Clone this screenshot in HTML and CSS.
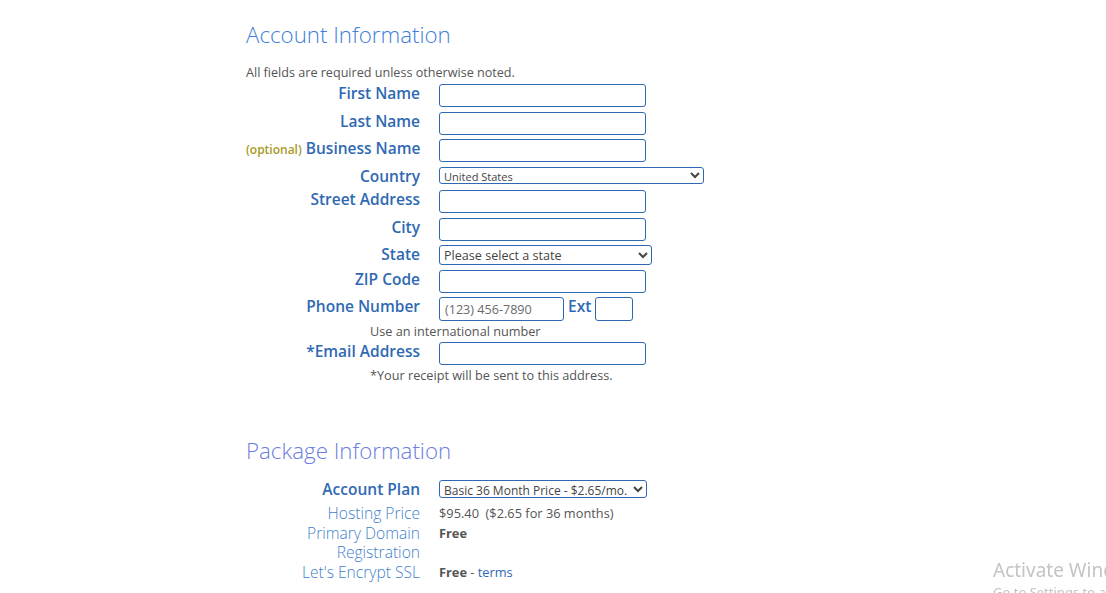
FILE: index.html
```html
<!DOCTYPE html>
<html lang="en">
<head>
<meta charset="utf-8">
<title>Account Information</title>
<link rel="stylesheet" href="styles.css">
</head>
<body>
<main class="page">
  <section class="section">
    <h2 class="heading heading-account">Account Information</h2>
    <p class="note">All fields are required unless otherwise noted.</p>
    <div class="rows">
      <div class="row"><label class="label">First Name</label><input class="input" type="text"></div>
      <div class="row"><label class="label">Last Name</label><input class="input" type="text"></div>
      <div class="row"><label class="label"><span class="optional">(optional)</span> Business Name</label><input class="input" type="text"></div>
      <div class="row row-country"><label class="label">Country</label><select class="select select-country"><option>United States</option></select></div>
      <div class="row"><label class="label">Street Address</label><input class="input" type="text"></div>
      <div class="row"><label class="label">City</label><input class="input" type="text"></div>
      <div class="row"><label class="label">State</label><select class="select select-state"><option>Please select a state</option></select></div>
      <div class="row"><label class="label">ZIP Code</label><input class="input" type="text"></div>
      <div class="row">
        <label class="label">Phone Number</label>
        <div class="phone">
          <input class="input input-phone" type="text" placeholder="(123) 456-7890">
          <span class="ext-label">Ext</span>
          <input class="input input-ext" type="text">
        </div>
      </div>
      <p class="hint">Use an international number</p>
      <div class="row"><label class="label">*Email Address</label><input class="input" type="text"></div>
      <p class="hint hint-receipt">*Your receipt will be sent to this address.</p>
    </div>
  </section>

  <section class="section section-package">
    <h2 class="heading heading-package">Package Information</h2>
    <div class="rows">
      <div class="row row-plan"><label class="label">Account Plan</label><select class="select select-plan"><option>Basic 36 Month Price - $2.65/mo.</option></select></div>
      <div class="info">
        <div class="info-row"><span class="info-label">Hosting Price</span><span class="info-value">$95.40&nbsp; ($2.65 for 36 months)</span></div>
        <div class="info-row"><span class="info-label">Primary Domain Registration</span><span class="info-value"><b>Free</b></span></div>
        <div class="info-row"><span class="info-label">Let's Encrypt SSL</span><span class="info-value"><b>Free</b> - <a class="link" href="#">terms</a></span></div>
      </div>
    </div>
  </section>
</main>
<div class="watermark">
  <div class="wm-title">Activate Windows</div>
  <div class="wm-sub">Go to Settings to activate Windows.</div>
</div>
</body>
</html>
```

FILE: styles.css
```css
html, body {
  margin: 0;
  padding: 0;
  background: #ffffff;
}

body {
  font-family: "Open Sans", "Liberation Sans", sans-serif;
  color: #555555;
  overflow: hidden;
  height: 593px;
}

.page {
  padding: 20px 0 0 246px;
  width: 520px;
}

.heading {
  margin: 0;
  font-size: 22.3px;
  line-height: 30px;
  font-weight: 300;
}

.heading-account {
  color: #3f7ed9;
}

.heading-package {
  color: #6b7ee0;
}

.note {
  margin: 14px 0 2px;
  font-size: 12.6px;
  line-height: 18px;
  color: #555555;
}

.rows {
  display: flex;
  flex-direction: column;
}

.row {
  display: grid;
  grid-template-columns: 174px auto;
  column-gap: 19px;
  align-items: start;
  margin-bottom: 4.5px;
}

.row-country {
  margin-bottom: 5.5px;
}

.label {
  text-align: right;
  font-size: 15.5px;
  line-height: 18px;
  font-weight: 600;
  color: #2f69b3;
  white-space: nowrap;
}

.optional {
  font-size: 12px;
  color: #a69a1e;
}

.input {
  box-sizing: border-box;
  width: 207px;
  height: 23px;
  margin: 0;
  padding: 1px 5px;
  border: 1px solid #2f69b3;
  border-radius: 3px;
  font-family: "Open Sans", "Liberation Sans", sans-serif;
  font-size: 12.6px;
  background: #ffffff;
  outline: none;
}

.input::placeholder {
  color: #6a6a6a;
}

.select {
  box-sizing: border-box;
  margin: 0;
  border: 1px solid #2f69b3;
  border-radius: 3px;
  background: #ffffff;
  font-family: "Open Sans", "Liberation Sans", sans-serif;
  color: #444444;
  padding: 0;
}

.select-country {
  width: 265px;
  height: 17px;
  font-size: 11px;
}

.select-state {
  width: 213px;
  height: 20px;
  font-size: 12.6px;
}

.select-plan {
  width: 208px;
  height: 18px;
  font-size: 12px;
}

.phone {
  display: flex;
  align-items: flex-start;
}

.input-phone {
  width: 125px;
  height: 24px;
}

.ext-label {
  margin: 0 4px 0 4px;
  font-size: 15.5px;
  line-height: 18px;
  font-weight: 600;
  color: #2f69b3;
}

.input-ext {
  width: 38px;
  height: 24px;
}

.hint {
  margin: -4px 0 2.5px 124px;
  font-size: 12.7px;
  line-height: 18px;
  color: #555555;
}

.hint-receipt {
  margin-top: -3.5px;
}

.section-package {
  margin-top: 49px;
}

.section-package .rows {
  margin-top: 14px;
}

.row-plan {
  margin-bottom: 6px;
}

.info {
  display: flex;
  flex-direction: column;
  row-gap: 1px;
}

.info-row {
  display: grid;
  grid-template-columns: 174px auto;
  column-gap: 19px;
  align-items: start;
}

.info-label {
  text-align: right;
  font-size: 15.6px;
  line-height: 19px;
  font-weight: 300;
  color: #3f7fcb;
}

.info-value {
  font-size: 12.8px;
  line-height: 19px;
  color: #555555;
}

.info-value b {
  font-weight: 700;
  color: #555555;
}

.link {
  color: #2f69b3;
  text-decoration: none;
}

.watermark {
  position: fixed;
  left: 993px;
  top: 558px;
  color: #c4c4c4;
  font-family: "Noto Sans", "Open Sans", sans-serif;
  white-space: nowrap;
}

.wm-title {
  font-size: 19px;
  line-height: 24px;
}

.wm-sub {
  font-size: 13px;
  line-height: 18px;
  margin-top: 1px;
}
```
